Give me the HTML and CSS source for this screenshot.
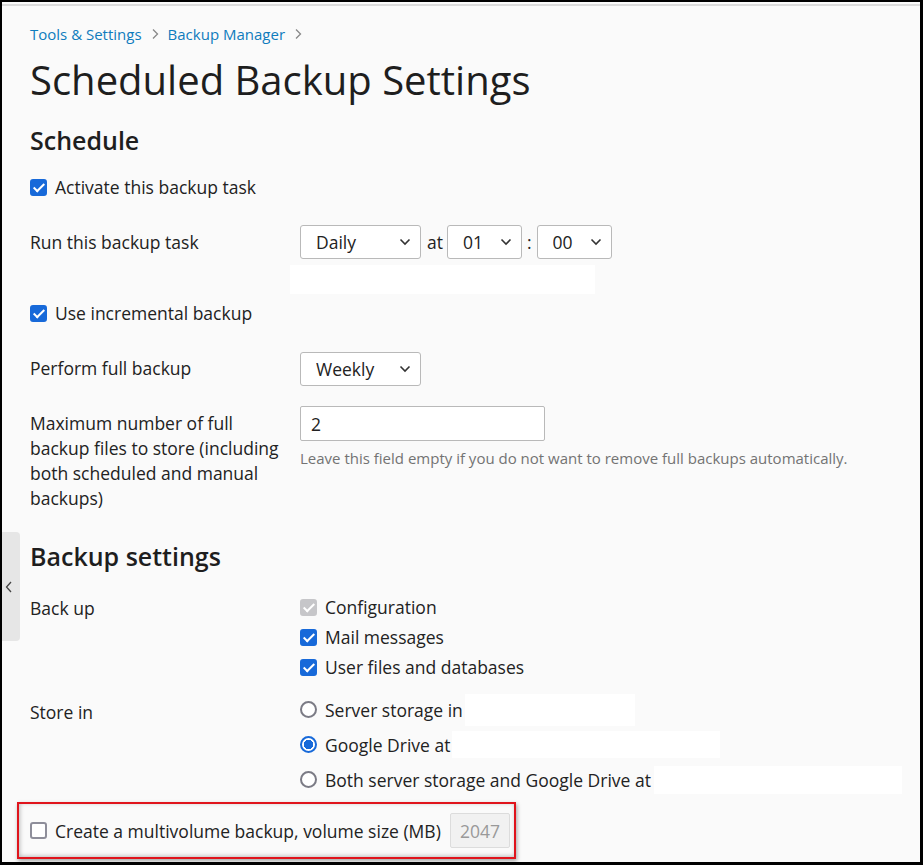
FILE: index.html
```html
<!DOCTYPE html>
<html lang="en">
<head>
<meta charset="utf-8">
<title>Scheduled Backup Settings</title>
<link rel="stylesheet" href="styles.css">
</head>
<body>
<div class="frame">
  <div class="topline"></div>
  <button class="side-tab" aria-label="Collapse">
    <svg width="8" height="12" viewBox="0 0 8 12"><path d="M6 1 L1.5 6 L6 11" fill="none" stroke="#444" stroke-width="1.3"/></svg>
  </button>
  <main class="page">
    <nav class="crumbs">
      <a href="#">Tools &amp; Settings</a>
      <span class="sep"><svg width="8" height="12" viewBox="0 0 8 12"><path d="M2 1.5 L6.5 6 L2 10.5" fill="none" stroke="#888" stroke-width="1.3"/></svg></span>
      <a href="#">Backup Manager</a>
      <span class="sep"><svg width="8" height="12" viewBox="0 0 8 12"><path d="M2 1.5 L6.5 6 L2 10.5" fill="none" stroke="#888" stroke-width="1.3"/></svg></span>
    </nav>
    <h1 class="title">Scheduled Backup Settings</h1>

    <h2 class="section">Schedule</h2>

    <label class="check-line r-activate"><input type="checkbox" class="cb" checked> Activate this backup task</label>

    <div class="row r-run">
      <div class="lbl">Run this backup task</div>
      <div class="ctl">
        <div class="inline">
          <span class="sel w-daily"><select><option>Daily</option></select><svg class="chev" width="12" height="8" viewBox="0 0 12 8"><path d="M1.5 1.5 L6 6 L10.5 1.5" fill="none" stroke="#333" stroke-width="1.6"/></svg></span>
          <span class="word">at</span>
          <span class="sel w-time"><select><option>01</option></select><svg class="chev" width="12" height="8" viewBox="0 0 12 8"><path d="M1.5 1.5 L6 6 L10.5 1.5" fill="none" stroke="#333" stroke-width="1.6"/></svg></span>
          <span class="word colon">:</span>
          <span class="sel w-time"><select><option>00</option></select><svg class="chev" width="12" height="8" viewBox="0 0 12 8"><path d="M1.5 1.5 L6 6 L10.5 1.5" fill="none" stroke="#333" stroke-width="1.6"/></svg></span>
        </div>
        <div class="blank b-run"></div>
      </div>
    </div>

    <label class="check-line r-incr"><input type="checkbox" class="cb" checked> Use incremental backup</label>

    <div class="row r-full">
      <div class="lbl">Perform full backup</div>
      <div class="ctl">
        <span class="sel w-daily"><select><option>Weekly</option></select><svg class="chev" width="12" height="8" viewBox="0 0 12 8"><path d="M1.5 1.5 L6 6 L10.5 1.5" fill="none" stroke="#333" stroke-width="1.6"/></svg></span>
      </div>
    </div>

    <div class="row r-max">
      <div class="lbl multi">Maximum number of full backup files to store (including both scheduled and manual backups)</div>
      <div class="ctl">
        <input class="text" type="text" value="2">
        <div class="hint">Leave this field empty if you do not want to remove full backups automatically.</div>
      </div>
    </div>

    <h2 class="section s2">Backup settings</h2>

    <div class="row r-backup">
      <div class="lbl">Back up</div>
      <div class="ctl list">
        <label class="opt"><input type="checkbox" class="cb" checked disabled> Configuration</label>
        <label class="opt"><input type="checkbox" class="cb" checked> Mail messages</label>
        <label class="opt"><input type="checkbox" class="cb" checked> User files and databases</label>
      </div>
    </div>

    <div class="row r-store">
      <div class="lbl">Store in</div>
      <div class="ctl list radios">
        <label class="opt"><input type="radio" name="st" class="rb"> Server storage in<span class="blank b1"></span></label>
        <label class="opt"><input type="radio" name="st" class="rb" checked> Google Drive at<span class="blank b2"></span></label>
        <label class="opt"><input type="radio" name="st" class="rb"> Both server storage and Google Drive at<span class="blank b3"></span></label>
      </div>
    </div>

    <div class="annot">
      <label class="opt"><input type="checkbox" class="cb"> Create a multivolume backup, volume size (MB)</label>
      <input class="text vol" type="text" value="2047" disabled>
    </div>
  </main>
</div>
</body>
</html>
```

FILE: styles.css
```css
* { box-sizing: border-box; }
html, body { margin: 0; padding: 0; }
body {
  font-family: "Open Sans", "Noto Sans", "Liberation Sans", sans-serif;
  color: #222;
  background: #000;
}
.frame {
  position: relative;
  width: 923px;
  height: 865px;
  border-style: solid;
  border-color: #000;
  border-width: 2px 3px 3px 2px;
  background: #fafafa;
  overflow: hidden;
}
.topline {
  height: 2px;
  margin-top: 2px;
  background: #dcdcdc;
}
.side-tab {
  position: absolute;
  left: 0;
  top: 530px;
  width: 18px;
  height: 109px;
  border: 0;
  padding: 0;
  background: #e6e6e6;
  border-radius: 0 4px 4px 0;
  display: flex;
  align-items: center;
  justify-content: center;
  padding-right: 4px;
}
.page {
  padding: 0 0 0 28px;
}
.crumbs {
  display: flex;
  align-items: center;
  gap: 9px;
  font-size: 15px;
  line-height: 20px;
  margin-top: 18px;
}
.crumbs a { color: #0f7cbd; text-decoration: none; }
.crumbs .sep { display: flex; align-items: center; }
.title {
  margin: 11px 0 0;
  font-size: 40px;
  line-height: 50px;
  font-weight: 400;
  color: #1e1e1e;
}
.section {
  margin: 19px 0 0;
  font-size: 25px;
  line-height: 32px;
  font-weight: 600;
  color: #1e1e1e;
}
.cb, .rb {
  appearance: none;
  -webkit-appearance: none;
  margin: 0 8px 0 0;
  width: 17px;
  height: 17px;
  flex: none;
  position: relative;
  top: 0;
}
.cb {
  border: 2px solid #8e8e9a;
  border-radius: 3px;
  background: #fff;
}
.cb:checked {
  border-color: #1769d9;
  background: #1769d9;
}
.cb:checked::after {
  content: "";
  position: absolute;
  left: 4px;
  top: 0px;
  width: 4px;
  height: 9px;
  border: solid #fff;
  border-width: 0 2px 2px 0;
  transform: rotate(45deg);
}
.cb:checked:disabled {
  border-color: #c6c6c9;
  background: #c6c6c9;
}
.rb {
  border: 2px solid #7b7b85;
  border-radius: 50%;
  background: #fff;
}
.rb:checked {
  border-color: #1769d9;
  background: radial-gradient(circle, #1769d9 0 4.5px, #fff 5px);
}
.check-line, .opt {
  display: flex;
  align-items: center;
  font-size: 17.5px;
  line-height: 24px;
}
.r-activate { margin-top: 19px; }
.row {
  display: grid;
  grid-template-columns: 270px 1fr;
  font-size: 17.5px;
  line-height: 25px;
}
.lbl { align-self: start; padding-right: 10px; }
.r-run { margin-top: 26px; }
.r-run .lbl { padding-top: 5px; }
.inline { display: flex; align-items: center; }
.sel { position: relative; display: inline-block; }
.sel select {
  appearance: none;
  -webkit-appearance: none;
  height: 34px;
  border: 1px solid #b9b9b9;
  border-radius: 3px;
  background: #fff;
  font-family: inherit;
  font-size: 17.5px;
  color: #222;
  padding: 0 0 0 15px;
}
.chev { position: absolute; right: 10px; top: 13px; pointer-events: none; }
.w-daily select { width: 121px; }
.w-time select { width: 75px; }
.word { margin: 0 4px 0 6px; font-size: 17.5px; }
.colon { margin: 0 5px 0 5px; }
.blank { display: block; background: #fff; }
.b-run { width: 305px; height: 29px; margin: 6px 0 0 -10px; }
.r-incr { margin-top: 7px; }
.r-full { margin-top: 27px; }
.r-full .lbl { padding-top: 4px; }
.r-max { margin-top: 20px; }
.r-max .lbl { padding-top: 5px; }
.text {
  display: block;
  width: 245px;
  height: 35px;
  border: 1px solid #b9b9b9;
  border-radius: 2px;
  background: #fff;
  font-family: inherit;
  font-size: 17.5px;
  color: #222;
  padding: 0 0 0 10px;
}
.hint {
  margin-top: 7px;
  font-size: 15px;
  line-height: 20px;
  color: #737373;
}
.s2 { margin-top: 29px; }
.r-backup { margin-top: 23px; }
.list { display: flex; flex-direction: column; gap: 6px; }
.r-backup .lbl { padding-top: 1px; }
.r-store { margin-top: 15px; }
.r-store .lbl { padding-top: 6px; }
.radios { gap: 4px; }
.radios .opt { height: 31px; }
.b1 { width: 170px; height: 32px; margin-left: 2px; }
.b2 { width: 268px; height: 27px; margin-left: 2px; }
.b3 { width: 248px; height: 28px; margin-left: 3px; }
.annot {
  display: flex;
  align-items: center;
  width: 499px;
  height: 57px;
  margin: 7px 0 0 -13px;
  padding: 0 4px 0 11px;
  border: 2px solid #e0141c;
  box-shadow: 1px 2px 4px rgba(0,0,0,.35), inset 1px -1px 4px rgba(0,0,0,.25);
}
.annot .opt { flex: 1; }
.vol {
  width: 60px;
  height: 35px;
  background: #f1f1f1;
  border-color: #dcdcdc;
  color: #999;
  padding: 0 0 0 9px;
}
```
